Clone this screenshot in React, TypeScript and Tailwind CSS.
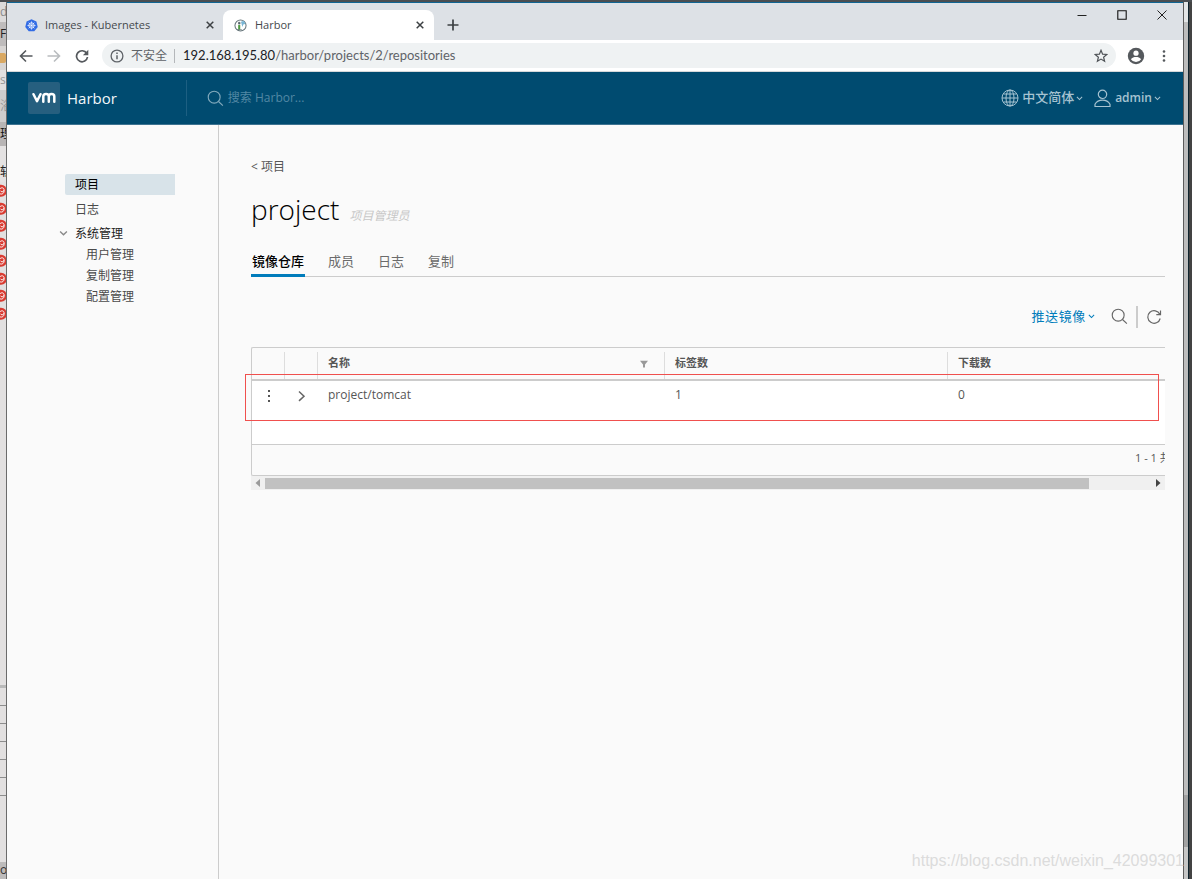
import { useState } from 'react';

const sideRows = [
    { height: 'h-5', tone: 'bg-[#dcdada]', text: 'de', color: 'text-[#8a8a8a]' },
    { height: 'h-6', tone: 'bg-[#bfbcbc]', text: 'F]', color: 'text-[#222]' },
    { height: 'h-6', tone: 'bg-[#d8d5d3]', text: '', color: '' },
    { height: 'h-5', tone: 'bg-[#e2e0e0]', text: 's|', color: 'text-[#999]' },
    { height: 'h-8', tone: 'bg-[#cfcdcd]', text: '浴', color: 'text-[#999]' },
    { height: 'h-6', tone: 'bg-[#b8b5b5]', text: '理', color: 'text-[#111]' },
    { height: 'h-4', tone: 'bg-[#e4e2e2]', text: '', color: '' },
    { height: 'h-5', tone: 'bg-[#e4e2e2]', text: '斩', color: 'text-[#222]' },
];

const tabs = ['镜像仓库', '成员', '日志', '复制'];
const adminLinks = ['用户管理', '复制管理', '配置管理'];

const Caret = ({ className }: { className: string }) => (
    <svg viewBox="0 0 8 8" className={className} fill="none" stroke="currentColor" strokeWidth="1.2">
        <path d="M1 2.2 4 5.2 7 2.2" />
    </svg>
);

const SearchIcon = ({ className }: { className: string }) => (
    <svg viewBox="0 0 18 18" className={className} fill="none" stroke="currentColor" strokeWidth="1.2">
        <circle cx="7.6" cy="7.6" r="6.3" />
        <path d="m12.2 12.2 4.6 4.4" />
    </svg>
);

const CloseIcon = () => (
    <svg viewBox="0 0 8 8" className="size-2" stroke="#3c4043" strokeWidth="1.5">
        <path d="m.7.7 6.6 6.6M7.3.7.7 7.3" />
    </svg>
);

const LeftEdge = () => (
    <div
        aria-hidden="true"
        className="flex w-[7px] shrink-0 flex-col overflow-hidden border-r border-[#6b6b6b] bg-[#e2e0e0] text-xs whitespace-nowrap"
    >
        {sideRows.map((row, i) => (
            <div key={i} className={`flex shrink-0 items-center overflow-hidden ${row.height} ${row.tone} ${row.color}`}>
                {i === 2 ? <span className="h-2.5 w-full rounded-r-xs bg-[#d9a862]" /> : <span className="w-1.5">{row.text}</span>}
            </div>
        ))}
        <div className="flex h-[140px] shrink-0 flex-col">
            {Array.from({ length: 8 }, (_, i) => (
                <svg key={i} viewBox="0 0 6 17" className="w-1.5 flex-1">
                    <circle cx="1" cy="8.5" r="6" fill="#d93a30" />
                    <path d="M0 6.5c2-2 4.500-.5 4 1.500S1 10 .6 8.500M4 8c.5 3-2 4.500-4 3.500" fill="none" stroke="#fff" />
                </svg>
            ))}
        </div>
        <div className="flex-1" />
        <div className="h-[3px] bg-[#b9b9b9]" />
        {Array.from({ length: 6 }, (_, i) => (
            <div key={i} className="h-[18px] shrink-0 border-b border-[#8d8d8d]" />
        ))}
        <div className="h-[66px] shrink-0" />
        <div className="h-[17px] shrink-0 bg-[#bdbbbb] text-[#333]">of</div>
    </div>
);

const RightEdge = () => (
    <div aria-hidden="true" className="flex w-[9px] shrink-0 border-l border-[#5b5b5b] bg-[#434343]">
        <div className="flex w-1 flex-col bg-[#bdbdbd]">
            <div className="h-5 bg-[#e3e5e6]" />
            <div className="flex-1" />
            <div className="h-[52px] bg-[#a2a2a2]" />
            <div className="h-8 bg-[#c6c6c6]" />
        </div>
        <div className="w-px bg-[#10242e]" />
    </div>
);

const TabStrip = () => (
    <div className="flex h-[37px] items-end bg-[#dde1e6] text-[11px] text-[#45494d]">
        <div className="flex h-[30px] w-[216px] items-center pr-[7px] pl-[18px]">
            <svg viewBox="0 0 14 14" className="size-[13px]">
                <path d="M7 .3 12.300 2.800 13.700 8.500 10 13.300H4L.3 8.500 1.700 2.800Z" fill="#326ce5" />
                <g fill="none" stroke="#fff">
                    <circle cx="7" cy="7" r="2.900" strokeWidth=".9" />
                    <path d="M7 2.500v9M2.500 7h9M3.900 3.900l6.200 6.200M10.100 3.900l-6.200 6.200" strokeWidth=".6" />
                </g>
            </svg>
            <span className="ml-[7px] flex-1">Images - Kubernetes</span>
            <button type="button" aria-label="Close tab" className="p-0.5">
                <CloseIcon />
            </button>
        </div>
        <div className="flex h-[30px] w-[211px] items-center rounded-t-lg bg-white pr-2 pl-[11px]">
            <svg viewBox="0 0 14 14" className="size-[13px]">
                <circle cx="7" cy="7" r="6" fill="#fff" stroke="#66757a" strokeWidth="1.100" />
                <path d="M4.500 6.500h2.200v5H4.500z" fill="#4c9c3f" />
                <path d="M4.800 3.500h1.700v2H4.800zM3.500 11.500h5" fill="#55646a" stroke="#55646a" strokeWidth=".7" />
                <path d="m7.500 3 3-1 2 3-2.500 1-1 2.500Z" fill="#7ab6d4" />
            </svg>
            <span className="ml-2 flex-1">Harbor</span>
            <button type="button" aria-label="Close tab" className="p-0.5">
                <CloseIcon />
            </button>
        </div>
        <button type="button" aria-label="New tab" className="flex h-[30px] w-[38px] items-center justify-center">
            <svg viewBox="0 0 12 12" className="size-3" stroke="#3c4043" strokeWidth="1.700">
                <path d="M6 .5v11M.5 6h11" />
            </svg>
        </button>
        <div className="ml-auto flex h-full items-start gap-[30px] pt-[7px] pr-4">
            <button type="button" aria-label="Minimize">
                <svg viewBox="0 0 10 10" className="size-2.5" stroke="#222">
                    <path d="M.5 5.500h9" />
                </svg>
            </button>
            <button type="button" aria-label="Maximize">
                <svg viewBox="0 0 10 10" className="size-2.5" fill="none" stroke="#111" strokeWidth="1.100">
                    <path d="M.8.8h8.400v8.400H.8z" />
                </svg>
            </button>
            <button type="button" aria-label="Close">
                <svg viewBox="0 0 10 10" className="size-2.5" stroke="#222">
                    <path d="m.5.5 9 9M9.500.5l-9 9" />
                </svg>
            </button>
        </div>
    </div>
);

const AddressBar = () => (
    <div className="flex h-8 items-center border-b border-[#d5d8da] bg-white pr-3 pl-3 text-[#5f6368]">
        <div className="flex gap-[14px]">
            <button type="button" aria-label="Back">
                <svg viewBox="0 0 14 14" className="size-3.5" fill="none" stroke="#55595d" strokeWidth="1.600">
                    <path d="M13.500 7H1.800M7 1.500 1.500 7 7 12.500" />
                </svg>
            </button>
            <button type="button" aria-label="Forward">
                <svg viewBox="0 0 14 14" className="size-3.5" fill="none" stroke="#b9bcbf" strokeWidth="1.600">
                    <path d="M.5 7h11.700M7 1.500 12.500 7 7 12.500" />
                </svg>
            </button>
            <button type="button" aria-label="Reload">
                <svg viewBox="0 0 14 14" className="size-3.5" fill="none" stroke="#55595d" strokeWidth="1.700">
                    <path d="M11.700 4.300A5.500 5.500 0 1 0 12.500 8" />
                    <path d="M13.300.8v5.400H7.900Z" fill="#55595d" stroke="none" />
                </svg>
            </button>
        </div>
        <div className="ml-[13px] flex h-[25px] flex-1 items-center rounded-full bg-[#eff2f3] px-2 text-[13px]">
            <svg viewBox="0 0 14 14" className="size-3.5" fill="none" stroke="#5f6368" strokeWidth="1.300">
                <circle cx="7" cy="7" r="5.900" />
                <path d="M7 6.200v4M7 3.500v1.400" strokeWidth="1.500" />
            </svg>
            <span className="ml-[7px] text-xs">不安全</span>
            <span className="mr-2 ml-[7px] h-[14px] w-px bg-[#b4b7ba]" />
            <div role="textbox" aria-label="Address" tabIndex={0} className="flex-1 font-['Lato',sans-serif] text-[13px]">
                <span className="text-[#202124]">192.168.195.80</span>/harbor/projects/2/repositories
            </div>
            <button type="button" aria-label="Bookmark">
                <svg viewBox="0 0 14 14" className="size-3.5" fill="none" stroke="#4f5357" strokeWidth="1.200">
                    <path d="m7 1.300 1.600 3.900 4.200.3-3.200 2.700 1 4.100L7 10.100l-3.600 2.200 1-4.100L1.200 5.500l4.200-.3Z" />
                </svg>
            </button>
        </div>
        <button type="button" aria-label="Profile" className="ml-[11px]">
            <svg viewBox="0 0 18 18" className="size-[18px]">
                <circle cx="9" cy="9" r="8.200" fill="#55595d" />
                <circle cx="9" cy="6.200" r="2.600" fill="#fff" />
                <path d="M3.900 12.200c1-1.700 3.200-2.300 5.100-2.300s4.100.6 5.100 2.300A6 6 0 0 1 9 15a6 6 0 0 1-5.100-2.800Z" fill="#fff" />
            </svg>
        </button>
        <button type="button" aria-label="Menu" className="ml-3">
            <svg viewBox="0 0 14 14" className="size-3.5" fill="#55595d">
                <circle cx="7" cy="2.500" r="1.300" />
                <circle cx="7" cy="7" r="1.300" />
                <circle cx="7" cy="11.500" r="1.300" />
            </svg>
        </button>
    </div>
);

const Header = () => (
    <header className="flex h-[53px] items-center border-b border-[#3d7391] bg-[#004b70] pr-[22px] pl-[21px] text-[#a6c3d1]">
        <a href="#" className="flex items-center text-[15px] text-[#f2f7fa]">
            <span className="flex size-8 items-center justify-center rounded-xs bg-[#265f7f]">
                <svg viewBox="0 0 24 12" className="h-3 w-6" fill="none" stroke="#fff" strokeWidth="2.500" strokeLinecap="round" strokeLinejoin="round">
                    <path d="M1.500 2.200 5 9.200 8.500 2.200M11.300 9.800V4.500c0-3.200 5.500-3.200 5.500 0v5.300M16.800 4.500c0-3.200 5.500-3.200 5.500 0v5.300" />
                </svg>
            </span>
            <span className="ml-[7px]">Harbor</span>
        </a>
        <label className="ml-[69px] flex h-9 flex-1 items-center border-l border-[#1d5f82] pl-5 text-[#81a9bc]">
            <SearchIcon className="size-[17px]" />
            <input
                aria-label="搜索"
                placeholder="搜索 Harbor..."
                className="ml-1 flex-1 text-xs outline-none placeholder:text-[#5288a4]"
            />
        </label>
        <button type="button" className="flex items-center text-[13px] font-medium">
            <svg viewBox="0 0 18 18" className="mr-[3px] size-[18px]" fill="none" stroke="currentColor">
                <circle cx="9" cy="9" r="8" />
                <ellipse cx="9" cy="9" rx="4" ry="8" />
                <path d="M9 1v16M1 9h16M2.500 5h13M2.500 13h13" />
            </svg>
            中文简体
            <Caret className="ml-0.5 size-[7px]" />
        </button>
        <button type="button" className="ml-[11px] flex items-center text-xs font-semibold">
            <svg viewBox="0 0 17 19" className="mr-1 h-[19px] w-[17px]" fill="none" stroke="currentColor" strokeWidth="1.200">
                <circle cx="8.500" cy="5.300" r="4.200" />
                <path d="M1 17.500v-2.300c1.700-2.900 4.400-4 7.500-4s5.800 1.100 7.500 4v2.300Z" />
            </svg>
            admin
            <Caret className="ml-0.5 size-[7px]" />
        </button>
    </header>
);

const Sidebar = () => (
    <nav className="w-[212px] shrink-0 border-r border-[#ccc] pt-[49px] pr-[43px] pl-[52px] text-xs text-[#4a4a4a]">
        <a href="#" className="ml-1.5 flex h-[21px] items-center rounded-l-xs bg-[#d8e3e9] pl-2.5 text-black">
            项目
        </a>
        <a href="#" className="mt-1 ml-4 flex h-[21px] items-center">
            日志
        </a>
        <button type="button" className="mt-[3px] flex h-[21px] items-center text-[#222]">
            <Caret className="mr-[7px] size-[9px] text-[#888]" />
            系统管理
        </button>
        {adminLinks.map((link) => (
            <a key={link} href="#" className="ml-[27px] flex h-[21px] items-center">
                {link}
            </a>
        ))}
    </nav>
);

const RepositoryGrid = () => (
    <div className="relative mt-[19px]">
        <div className="rounded-l-xs border-y border-l border-[#ccc]">
            <table className="w-full table-fixed text-left text-xs text-[#565656]">
                <colgroup>
                    <col className="w-[33px]" />
                    <col className="w-[33px]" />
                    <col className="w-[38%]" />
                    <col className="w-[31%]" />
                    <col />
                </colgroup>
                <thead className="border-b-2 border-[#ccc] text-[11px]">
                    <tr className="h-[31px]">
                        <th aria-label="操作" className="p-0 pt-1">
                            <div className="h-[27px] border-r border-[#ddd]" />
                        </th>
                        <th aria-label="展开" className="p-0 pt-1">
                            <div className="h-[27px] border-r border-[#ddd]" />
                        </th>
                        <th className="p-0 pt-1 font-semibold">
                            <div className="flex h-[27px] items-center justify-between border-r border-[#ddd] pr-4 pb-1 pl-2.5">
                                名称
                                <button type="button" aria-label="过滤">
                                    <svg viewBox="0 0 8 8" className="size-2" fill="#999">
                                        <path d="M0 .8h8L5 4.400V7.500H3V4.400Z" />
                                    </svg>
                                </button>
                            </div>
                        </th>
                        <th className="p-0 pt-1 font-semibold">
                            <div className="flex h-[27px] items-center border-r border-[#ddd] pb-1 pl-2.5">标签数</div>
                        </th>
                        <th className="p-0 pt-1 font-semibold">
                            <div className="flex h-[27px] items-center pb-1 pl-2.5">下载数</div>
                        </th>
                    </tr>
                </thead>
                <tbody className="bg-white">
                    <tr className="h-16 align-top">
                        <td className="pt-2 pl-[11px]">
                            <button type="button" aria-label="更多操作" className="block">
                                <svg viewBox="0 0 12 14" className="h-3.5 w-3" fill="#555">
                                    <path d="M5 1h2v2H5zM5 6h2v2H5zM5 11h2v2H5z" />
                                </svg>
                            </button>
                        </td>
                        <td className="pt-2 pl-3">
                            <button type="button" aria-label="展开行" className="block">
                                <svg viewBox="0 0 10 14" className="h-3.5 w-2.5" fill="none" stroke="#666" strokeWidth="1.500">
                                    <path d="m2 2.500 5 4.700-5 4.700" />
                                </svg>
                            </button>
                        </td>
                        <td className="pt-1.5 pl-2.5">
                            <a href="#">project/tomcat</a>
                        </td>
                        <td className="pt-1.5 pl-2.5">1</td>
                        <td className="pt-1.5 pl-2.5">0</td>
                    </tr>
                </tbody>
            </table>
            <div className="flex h-[31px] items-center justify-end border-t border-[#ccc] pb-1 text-[11px] text-[#565656]">
                <span className="w-[30px] overflow-hidden whitespace-nowrap">1 - 1 共 1 条记录</span>
            </div>
        </div>
        <div className="flex h-[14px] items-center bg-[#f0f0f0] pr-1 pl-1">
            <svg viewBox="0 0 5 8" className="h-2 w-[5px]" fill="#9a9a9a">
                <path d="M5 0v8L.5 4Z" />
            </svg>
            <div className="mx-[5px] flex-1">
                <div className="h-[11px] w-[93%] bg-[#c1c1c1]" />
            </div>
            <svg viewBox="0 0 5 8" className="h-2 w-[5px]" fill="#444">
                <path d="M0 0v8l4.500-4Z" />
            </svg>
        </div>
        <div className="pointer-events-none absolute top-[27px] right-1.5 -left-1.5 h-[47px] border border-[#f0504e]" />
    </div>
);

const Project = () => {
    const [selectedTab, setSelectedTab] = useState('镜像仓库');

    return (
        <main className="min-w-0 flex-1 pt-8 pr-[18px] pl-8">
            <a href="#" className="flex h-5 items-center text-xs text-[#565656]">
                &lt; 项目
            </a>
            <div className="mt-3 flex h-10 items-baseline">
                <h1 className="text-[28px] leading-10 font-light text-black">project</h1>
                <span className="ml-2.5 text-xs text-[#c8c8c8] italic">项目管理员</span>
            </div>
            <div className="mt-4 flex h-8 gap-[22px] border-b border-[#ccc] text-[13px] text-[#6b6b6b]">
                {tabs.map((tab) => (
                    <button
                        key={tab}
                        type="button"
                        onClick={() => setSelectedTab(tab)}
                        className={
                            selectedTab === tab
                                ? '-mb-px border-b-3 border-[#007cbb] px-px pt-1 font-medium text-black'
                                : 'px-px pt-0.5'
                        }
                    >
                        {tab}
                    </button>
                ))}
            </div>
            <div className="mt-7 flex h-[23px] items-center justify-end text-[#666]">
                <button type="button" className="flex items-center text-[13px] tracking-wider text-[#007cbb]">
                    推送镜像
                    <Caret className="ml-0.5 size-[7px]" />
                </button>
                <button type="button" aria-label="搜索" className="ml-4">
                    <SearchIcon className="size-[17px]" />
                </button>
                <span className="mx-2 h-[22px] w-0.5 bg-[#ccc]" />
                <button type="button" aria-label="刷新" className="mr-[3px]">
                    <svg viewBox="0 0 16 16" className="size-4" fill="none" stroke="currentColor" strokeWidth="1.200">
                        <path d="M13.800 5.300A6.300 6.300 0 1 0 14.200 9.500M14.500 1.500v4.200h-4.200" />
                    </svg>
                </button>
            </div>
            <RepositoryGrid />
        </main>
    );
};

const App = () => (
    <div className="relative flex min-h-screen flex-col overflow-hidden border-t-2 border-[#4a4e52] font-['Open_Sans','Noto_Sans_CJK_SC',sans-serif]">
        <div className="flex flex-1">
            <LeftEdge />
            <div className="flex min-w-0 flex-1 flex-col border-t border-[#0f6593] bg-[#fafafa]">
                <TabStrip />
                <AddressBar />
                <Header />
                <div className="flex flex-1">
                    <Sidebar />
                    <Project />
                </div>
            </div>
            <RightEdge />
        </div>
        <p className="absolute right-2 bottom-1.5 font-['Liberation_Sans',sans-serif] text-base text-[#dcdcdc]">
            https://blog.csdn.net/weixin_42099301
        </p>
    </div>
);

export default App;
